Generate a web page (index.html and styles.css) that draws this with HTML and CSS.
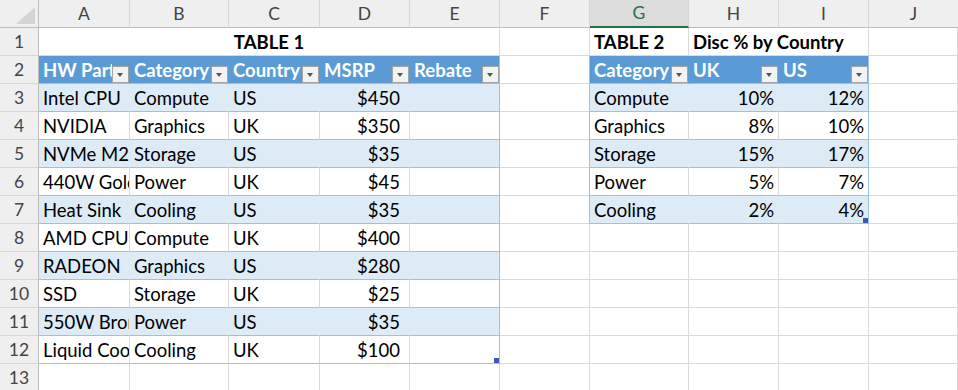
FILE: index.html
```html
<!DOCTYPE html>
<html lang="en">
<head>
<meta charset="utf-8">
<title>Sheet</title>
<link rel="stylesheet" href="styles.css">
</head>
<body>
<div class="sheet">
  <!-- column headers -->
  <div class="corner"><span class="tri"></span></div>
  <div class="ch">A</div><div class="ch">B</div><div class="ch">C</div><div class="ch">D</div><div class="ch">E</div>
  <div class="ch">F</div><div class="ch sel">G</div><div class="ch">H</div><div class="ch">I</div><div class="ch last">J</div>

  <!-- row 1 -->
  <div class="rh">1</div>
  <div class="c b center span5">TABLE 1</div>
  <div class="c"></div>
  <div class="c b">TABLE 2</div>
  <div class="c b span2">Disc % by Country</div>
  <div class="c"></div>

  <!-- row 2 -->
  <div class="rh">2</div>
  <div class="c th"><span class="t">HW Part</span><span class="fb"></span></div>
  <div class="c th"><span class="t">Category</span><span class="fb"></span></div>
  <div class="c th"><span class="t">Country</span><span class="fb"></span></div>
  <div class="c th"><span class="t">MSRP</span><span class="fb"></span></div>
  <div class="c th end"><span class="t">Rebate</span><span class="fb"></span></div>
  <div class="c edge"></div>
  <div class="c th"><span class="t">Category</span><span class="fb"></span></div>
  <div class="c th"><span class="t">UK</span><span class="fb"></span></div>
  <div class="c th end"><span class="t">US</span><span class="fb"></span></div>
  <div class="c"></div>

  <!-- row 3 -->
  <div class="rh">3</div>
  <div class="c band">Intel CPU</div>
  <div class="c band">Compute</div>
  <div class="c band">US</div>
  <div class="c band num cur">$450</div>
  <div class="c band end"></div>
  <div class="c edge"></div>
  <div class="c band">Compute</div>
  <div class="c band num">10%</div>
  <div class="c band num end">12%</div>
  <div class="c"></div>

  <!-- row 4 -->
  <div class="rh">4</div>
  <div class="c tw">NVIDIA</div>
  <div class="c tw">Graphics</div>
  <div class="c tw">UK</div>
  <div class="c tw num cur">$350</div>
  <div class="c tw end"></div>
  <div class="c edge"></div>
  <div class="c tw">Graphics</div>
  <div class="c tw num">8%</div>
  <div class="c tw num end">10%</div>
  <div class="c"></div>

  <!-- row 5 -->
  <div class="rh">5</div>
  <div class="c band">NVMe M2 SSD</div>
  <div class="c band">Storage</div>
  <div class="c band">US</div>
  <div class="c band num cur">$35</div>
  <div class="c band end"></div>
  <div class="c edge"></div>
  <div class="c band">Storage</div>
  <div class="c band num">15%</div>
  <div class="c band num end">17%</div>
  <div class="c"></div>

  <!-- row 6 -->
  <div class="rh">6</div>
  <div class="c tw">440W Gold PSU</div>
  <div class="c tw">Power</div>
  <div class="c tw">UK</div>
  <div class="c tw num cur">$45</div>
  <div class="c tw end"></div>
  <div class="c edge"></div>
  <div class="c tw">Power</div>
  <div class="c tw num">5%</div>
  <div class="c tw num end">7%</div>
  <div class="c"></div>

  <!-- row 7 -->
  <div class="rh">7</div>
  <div class="c band">Heat Sink</div>
  <div class="c band">Cooling</div>
  <div class="c band">US</div>
  <div class="c band num cur">$35</div>
  <div class="c band end"></div>
  <div class="c edge"></div>
  <div class="c band">Cooling</div>
  <div class="c band num">2%</div>
  <div class="c band num end">4%<span class="handle"></span></div>
  <div class="c"></div>

  <!-- row 8 -->
  <div class="rh">8</div>
  <div class="c tw">AMD CPU</div>
  <div class="c tw">Compute</div>
  <div class="c tw">UK</div>
  <div class="c tw num cur">$400</div>
  <div class="c tw end"></div>
  <div class="c"></div>
  <div class="c"></div>
  <div class="c"></div>
  <div class="c"></div>
  <div class="c"></div>

  <!-- row 9 -->
  <div class="rh">9</div>
  <div class="c band">RADEON</div>
  <div class="c band">Graphics</div>
  <div class="c band">US</div>
  <div class="c band num cur">$280</div>
  <div class="c band end"></div>
  <div class="c"></div>
  <div class="c"></div>
  <div class="c"></div>
  <div class="c"></div>
  <div class="c"></div>

  <!-- row 10 -->
  <div class="rh">10</div>
  <div class="c tw">SSD</div>
  <div class="c tw">Storage</div>
  <div class="c tw">UK</div>
  <div class="c tw num cur">$25</div>
  <div class="c tw end"></div>
  <div class="c"></div>
  <div class="c"></div>
  <div class="c"></div>
  <div class="c"></div>
  <div class="c"></div>

  <!-- row 11 -->
  <div class="rh">11</div>
  <div class="c band">550W Bronze PSU</div>
  <div class="c band">Power</div>
  <div class="c band">US</div>
  <div class="c band num cur">$35</div>
  <div class="c band end"></div>
  <div class="c"></div>
  <div class="c"></div>
  <div class="c"></div>
  <div class="c"></div>
  <div class="c"></div>

  <!-- row 12 -->
  <div class="rh">12</div>
  <div class="c tw">Liquid Cooler</div>
  <div class="c tw">Cooling</div>
  <div class="c tw">UK</div>
  <div class="c tw num cur">$100</div>
  <div class="c tw end"><span class="handle"></span></div>
  <div class="c"></div>
  <div class="c"></div>
  <div class="c"></div>
  <div class="c"></div>
  <div class="c"></div>

  <!-- row 13 -->
  <div class="rh">13</div>
  <div class="c"></div>
  <div class="c"></div>
  <div class="c"></div>
  <div class="c"></div>
  <div class="c"></div>
  <div class="c"></div>
  <div class="c"></div>
  <div class="c"></div>
  <div class="c"></div>
  <div class="c"></div>
</div>
</body>
</html>
```

FILE: styles.css
```css
* { box-sizing: border-box; }

html, body {
  margin: 0;
  padding: 0;
  background: #ffffff;
  overflow: hidden;
}

.sheet {
  display: grid;
  grid-template-columns: 39px 91px 99px 91px 90px 90px 90px 99px 90px 90px 1fr;
  grid-auto-rows: 28px;
  width: 958px;
  font-family: Lato, "Liberation Sans", sans-serif;
}

/* headers */
.corner {
  background: #efefef;
  border-right: 1px solid #bdbdbd;
  border-bottom: 1px solid #bdbdbd;
  display: flex;
  align-items: flex-end;
  justify-content: flex-end;
  padding: 0 3px 3px 0;
}
.tri {
  width: 19px;
  height: 17px;
  background: #d4d4d4;
  clip-path: polygon(100% 0, 100% 100%, 0 100%);
}

.ch {
  background: #efefef;
  border-right: 1px solid #d6d6d6;
  border-bottom: 1px solid #bdbdbd;
  display: flex;
  align-items: center;
  justify-content: center;
  font-size: 17.5px;
  line-height: 22px;
  color: #444444;
}
.ch.sel {
  background: #dcdcdc;
  color: #217346;
  border-bottom: 2px solid #217346;
}
.ch.last { border-right: none; }

.rh {
  background: #efefef;
  border-right: 1px solid #bdbdbd;
  border-bottom: 1px solid #d6d6d6;
  display: flex;
  align-items: flex-end;
  justify-content: center;
  padding-bottom: 2px;
  font-size: 17.5px;
  line-height: 22px;
  color: #444444;
}

/* cells */
.c {
  position: relative;
  display: flex;
  align-items: flex-end;
  min-width: 0;
  overflow: hidden;
  white-space: nowrap;
  padding: 0 4px 2px 4px;
  font-size: 18.5px;
  line-height: 22px;
  color: #000000;
  background: #ffffff;
  border-right: 1px solid #dadada;
  border-bottom: 1px solid #dadada;
}
.b { font-weight: 700; }
.center { justify-content: center; }
.num { justify-content: flex-end; }
.cur { padding-right: 9px; }
.span5 { grid-column: span 5; }
.span2 { grid-column: span 2; }

/* table styles */
.th {
  background: #5b9bd5;
  color: #ffffff;
  font-weight: 700;
  border-right-color: #5b9bd5;
  border-bottom-color: #9bc2e6;
  padding: 0 0 0 4px;
}
.th .t {
  flex: 1 1 auto;
  min-width: 0;
  overflow: hidden;
  padding-bottom: 2px;
}
.fb {
  flex: none;
  position: relative;
  width: 17px;
  height: 17px;
  background: #f3f3f3;
  border: 1px solid #a3a3a3;
}
.fb::after {
  content: "";
  position: absolute;
  left: 4px;
  top: 6px;
  border-left: 3.5px solid transparent;
  border-right: 3.5px solid transparent;
  border-top: 4px solid #555555;
}

.band {
  background: #ddebf7;
  border-right-color: #ddebf7;
  border-bottom-color: #9bc2e6;
}
.tw {
  border-bottom-color: #9bc2e6;
}
.end { border-right-color: #9bc2e6; }
.edge { border-right-color: #9bc2e6; }

.handle {
  position: absolute;
  right: 0;
  bottom: 0;
  width: 5px;
  height: 5px;
  background: #4055b5;
}
```
